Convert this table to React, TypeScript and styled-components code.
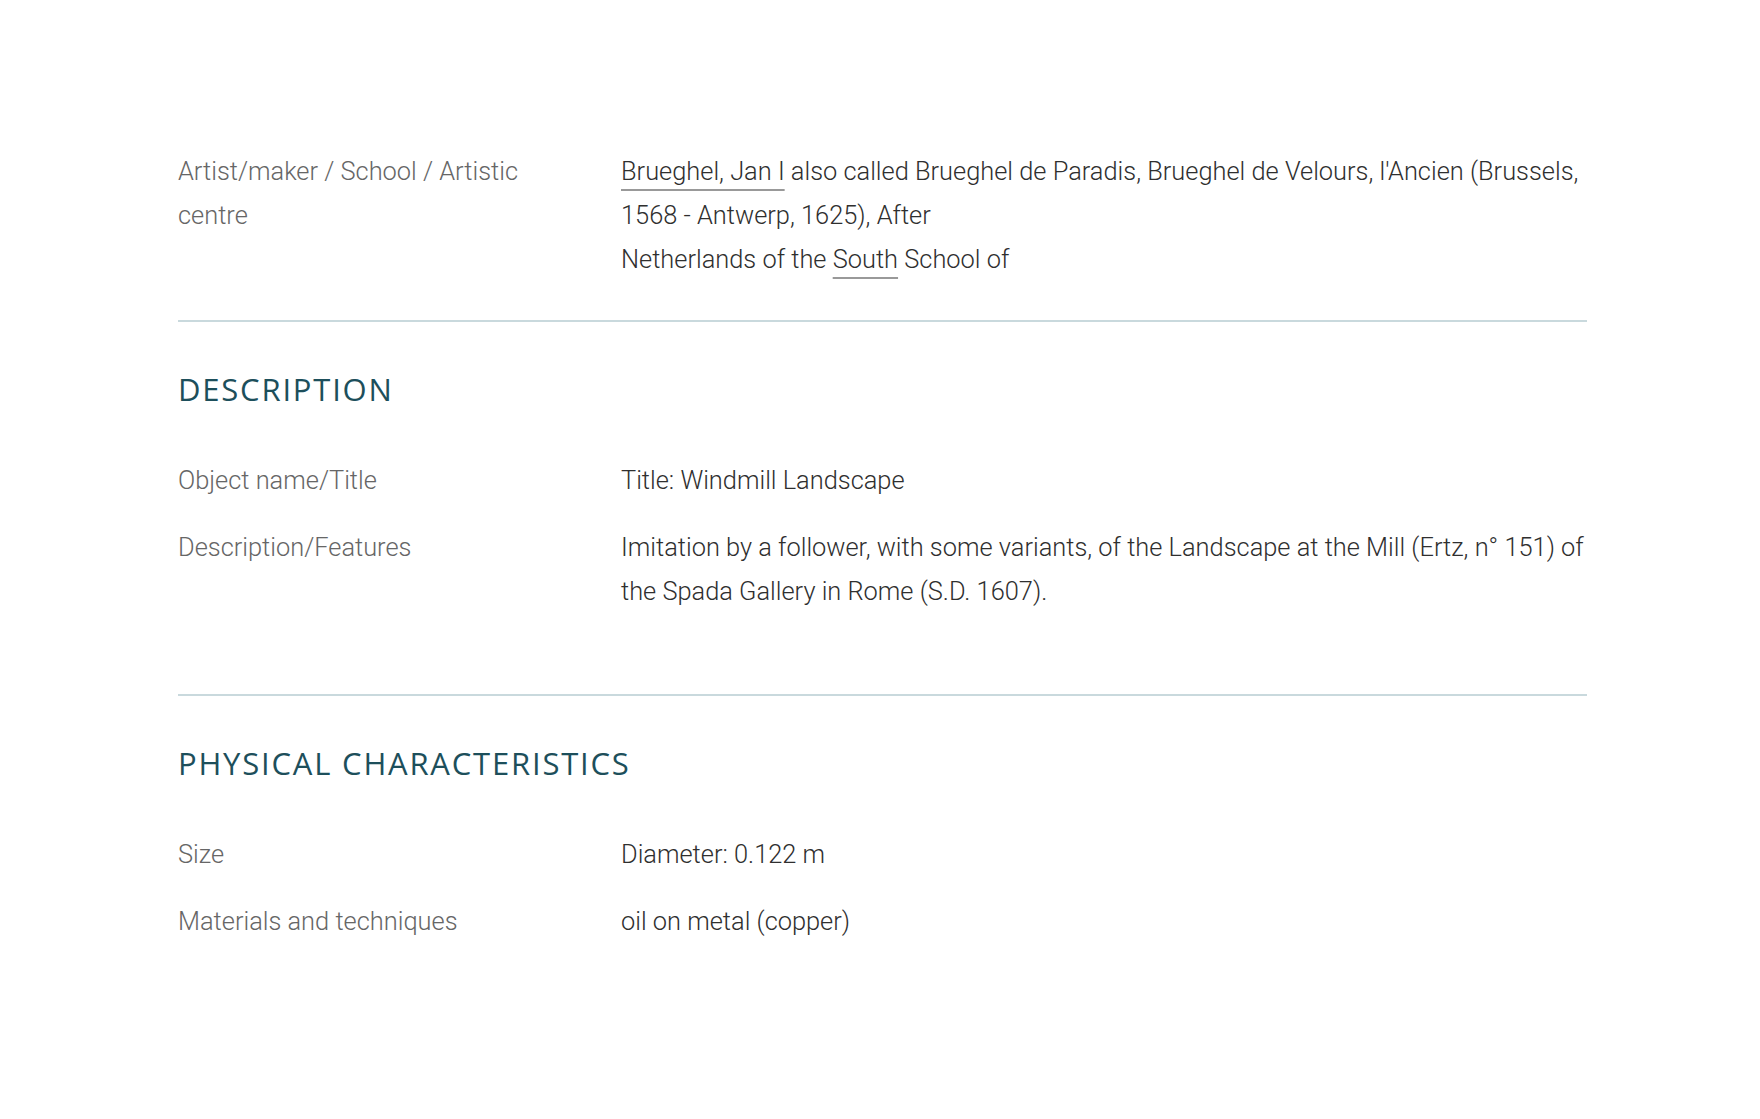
import React from "react";
import styled, { createGlobalStyle } from "styled-components";

const GlobalStyle = createGlobalStyle`
  html, body {
    margin: 0;
    padding: 0;
    background: #ffffff;
  }
  body {
    font-family: Roboto, "Liberation Sans", sans-serif;
    -webkit-font-smoothing: antialiased;
  }
`;

const Page = styled.main`
  width: 1409px;
  margin: 0 0 0 178px;
  padding-top: 149px;
  padding-bottom: 160px;
`;

const Section = styled.section<{ $first?: boolean; $bottom: number }>`
  padding-top: ${(p) => (p.$first ? "0" : "49px")};
  padding-bottom: ${(p) => p.$bottom}px;
  border-top: ${(p) => (p.$first ? "none" : "2px solid #c9d9dd")};
`;

const Heading = styled.h2`
  margin: 0 0 50px;
  font-family: "Open Sans", "Liberation Sans", sans-serif;
  font-weight: 400;
  font-size: 31px;
  line-height: 37px;
  letter-spacing: 1.8px;
  color: #1d4f5b;
  text-transform: uppercase;
`;

const List = styled.dl`
  margin: 0;
  display: grid;
  grid-template-columns: 380px 1fr;
  column-gap: 63px;
  row-gap: 23px;
  font-size: 25.4px;
  line-height: 44px;
  font-weight: 300;
`;

const Label = styled.dt`
  margin: 0;
  color: #666666;
`;

const Value = styled.dd`
  margin: 0;
  color: #2f2f2f;
`;

const Line = styled.span`
  display: block;
`;

const Link = styled.a`
  color: inherit;
  text-decoration: underline;
  text-decoration-color: #999999;
  text-decoration-thickness: 1.5px;
  text-underline-offset: 9px;
`;

export default function App() {
  return (
    <>
      <GlobalStyle />
      <Page>
        <Section $first $bottom={39}>
          <List>
            <Label>Artist/maker / School / Artistic centre</Label>
            <Value>
              <Line>
                <Link href="#">Brueghel, Jan I</Link> also called Brueghel de
                Paradis, Brueghel de Velours, l'Ancien (Brussels, 1568 -
                Antwerp, 1625), After
              </Line>
              <Line>
                Netherlands of the <Link href="#">South</Link> School of
              </Line>
            </Value>
          </List>
        </Section>
        <Section $bottom={81}>
          <Heading>Description</Heading>
          <List>
            <Label>Object name/Title</Label>
            <Value>Title: Windmill Landscape</Value>
            <Label>Description/Features</Label>
            <Value>
              Imitation by a follower, with some variants, of the Landscape at
              the Mill (Ertz, n° 151) of the Spada Gallery in Rome (S.D. 1607).
            </Value>
          </List>
        </Section>
        <Section $bottom={40}>
          <Heading>Physical characteristics</Heading>
          <List>
            <Label>Size</Label>
            <Value>Diameter: 0.122 m</Value>
            <Label>Materials and techniques</Label>
            <Value>oil on metal (copper)</Value>
          </List>
        </Section>
      </Page>
    </>
  );
}
